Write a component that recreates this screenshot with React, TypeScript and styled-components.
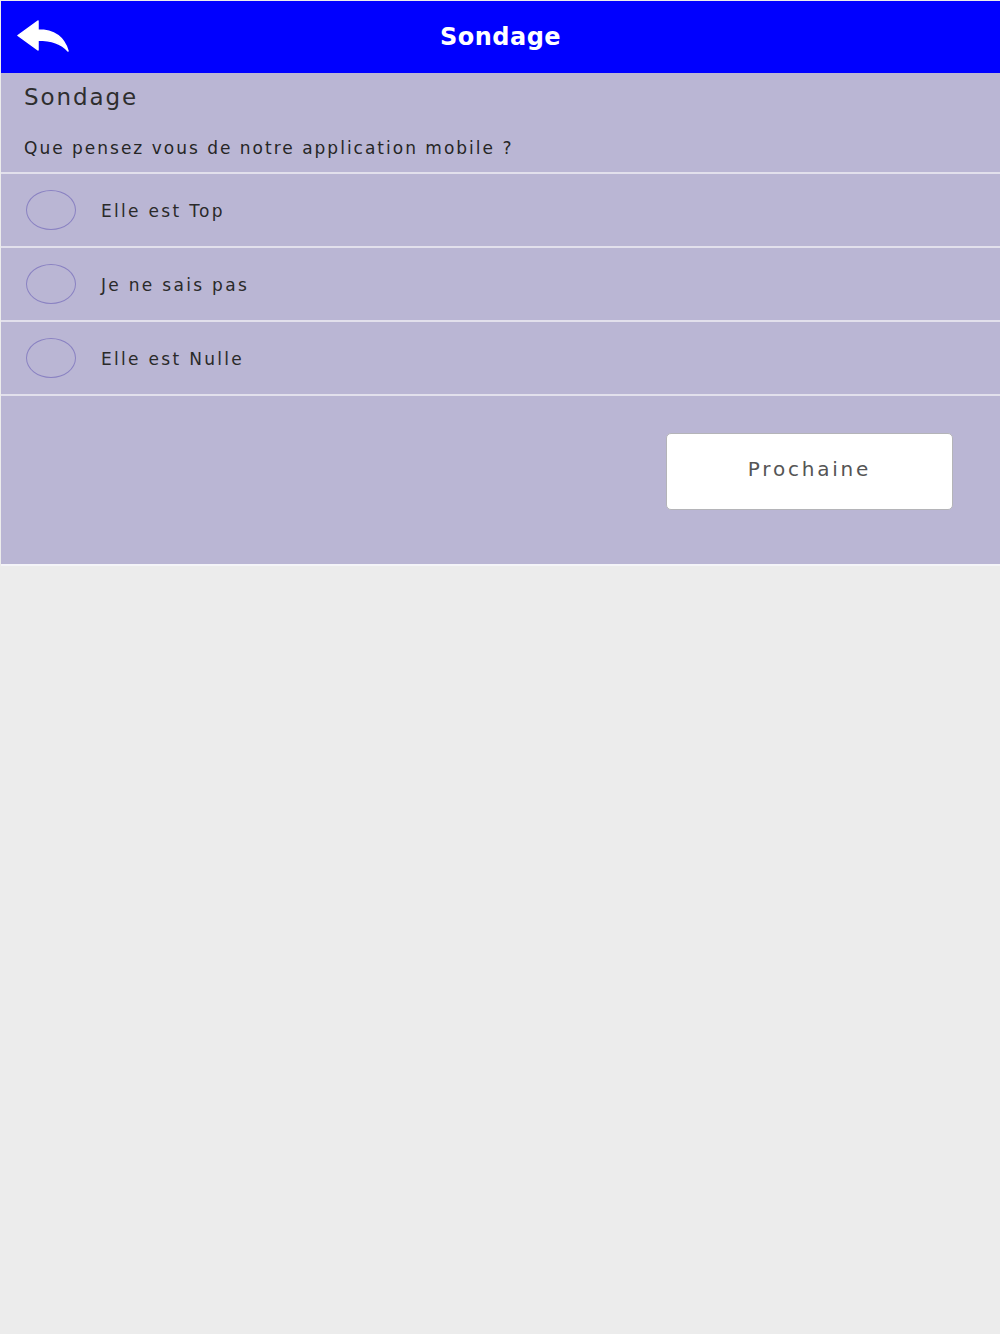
import React, { FunctionComponent, useState } from 'react';
import styled, { createGlobalStyle } from 'styled-components';

const GlobalStyle = createGlobalStyle`
  html, body {
    margin: 0;
    padding: 0;
    background: #ececec;
  }

  body {
    font-family: 'DejaVu Sans', 'Liberation Sans', sans-serif;
  }
`;

const Page = styled.div`
  min-height: 1334px;
  box-sizing: border-box;
  padding: 1px 0 0 1px;
  background: #ececec;
`;

const Header = styled.header`
  position: relative;
  display: flex;
  align-items: center;
  justify-content: center;
  height: 72px;
  background: #0000ff;
`;

const BackButton = styled.button`
  position: absolute;
  left: 16px;
  top: 19px;
  display: flex;
  padding: 0;
  border: 0;
  background: none;
  cursor: pointer;
`;

const Title = styled.h1`
  margin: 0;
  color: #ffffff;
  font-size: 24px;
  font-weight: bold;
  letter-spacing: 0.5px;
`;

const Panel = styled.main`
  background: #bab6d4;
  border-bottom: 2px solid #f4f4f8;
`;

const Intro = styled.section`
  display: flex;
  flex-direction: column;
  height: 99px;
  box-sizing: border-box;
  padding: 11px 0 0 23px;
`;

const Subtitle = styled.h2`
  margin: 0;
  color: #2e2e2e;
  font-size: 23px;
  font-weight: normal;
  letter-spacing: 1.9px;
`;

const Question = styled.p`
  margin: 28px 0 0;
  color: #262626;
  font-size: 17px;
  letter-spacing: 2px;
`;

const Option = styled.label`
  display: flex;
  align-items: center;
  gap: 25px;
  height: 72px;
  padding-left: 25px;
  border-top: 2px solid #e2e0ec;
  cursor: pointer;
`;

const Radio = styled.span<{ $checked: boolean }>`
  width: 50px;
  height: 40px;
  box-sizing: border-box;
  border: 1.5px solid #8a82c2;
  border-radius: 50%;
  background: ${(p) => (p.$checked ? '#8a82c2' : 'transparent')};
`;

const OptionText = styled.span`
  color: #2a2a2a;
  font-size: 17px;
  letter-spacing: 2.3px;
  padding-top: 1px;
`;

const Footer = styled.section`
  display: flex;
  justify-content: flex-end;
  align-items: flex-start;
  height: 170px;
  box-sizing: border-box;
  padding: 37px 47px 0 0;
  border-top: 2px solid #e2e0ec;
`;

const NextButton = styled.button`
  width: 287px;
  height: 77px;
  border: 1px solid #b4b4b8;
  border-radius: 5px;
  background: #ffffff;
  color: #555555;
  font-family: 'DejaVu Sans', 'Liberation Sans', sans-serif;
  font-size: 20px;
  letter-spacing: 2.8px;
  padding-bottom: 6px;
  cursor: pointer;
`;

const options = ['Elle est Top', 'Je ne sais pas', 'Elle est Nulle'];

const ReplyIcon: FunctionComponent = () => (
  <svg width="53" height="32" viewBox="0 0 53 32">
    <path
      d="M1 15.5 L21 1 L21 10 C37 10 47 17 51 31 C44 23 35 20 21 20 L21 30 Z"
      fill="#ffffff"
      stroke="#ffffff"
      strokeWidth="1.5"
      strokeLinejoin="round"
    />
  </svg>
);

const App: FunctionComponent = () => {
  const [selected, setSelected] = useState<number | null>(null);

  return (
    <>
      <GlobalStyle />
      <Page>
        <Header>
          <BackButton type="button" aria-label="Retour">
            <ReplyIcon />
          </BackButton>
          <Title>Sondage</Title>
        </Header>
        <Panel>
          <Intro>
            <Subtitle>Sondage</Subtitle>
            <Question>Que pensez vous de notre application mobile ?</Question>
          </Intro>
          {options.map((label, i) => (
            <Option key={label} onClick={() => setSelected(i)}>
              <Radio $checked={selected === i} />
              <OptionText>{label}</OptionText>
            </Option>
          ))}
          <Footer>
            <NextButton type="button">Prochaine</NextButton>
          </Footer>
        </Panel>
      </Page>
    </>
  );
};

export default App;
